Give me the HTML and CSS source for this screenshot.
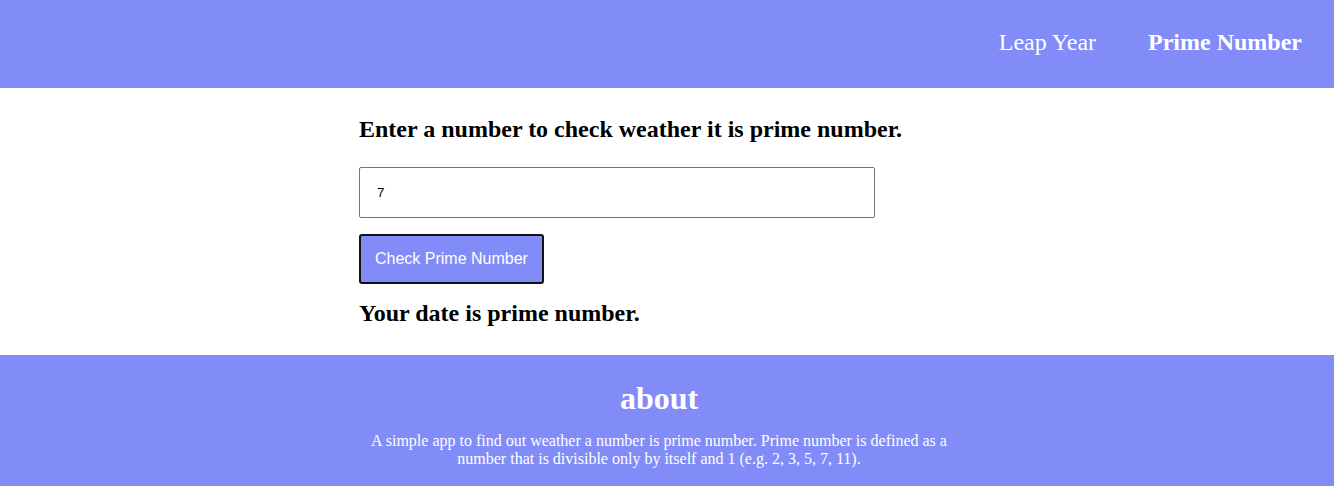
FILE: index.html
```html
<!DOCTYPE html>
<html lang="en">
<head>
<meta charset="utf-8">
<title>Prime Number</title>
<link rel="stylesheet" href="styles.css">
</head>
<body>
<header class="topbar">
  <nav class="nav">
    <a class="nav-link" href="#">Leap Year</a>
    <a class="nav-link active" href="#">Prime Number</a>
  </nav>
</header>
<main class="content">
  <h2 class="prompt">Enter a number to check weather it is prime number.</h2>
  <input class="num-input" type="text" value="7">
  <button class="check-btn" type="button">Check Prime Number</button>
  <h2 class="result">Your date is prime number.</h2>
</main>
<footer class="footer">
  <div class="footer-inner">
    <h1 class="footer-title">about</h1>
    <p class="footer-text">A simple app to find out weather a number is prime number. Prime number is defined as a number that is divisible only by itself and 1 (e.g. 2, 3, 5, 7, 11).</p>
  </div>
</footer>
</body>
</html>
```
FILE: styles.css
```css
html, body {
  margin: 0;
  padding: 0;
}
body {
  font-family: "Liberation Serif", "Times New Roman", serif;
  color: #000;
  background: #fff;
}
.topbar {
  box-sizing: border-box;
  background: #818cf8;
  height: 88px;
  display: flex;
  align-items: center;
  justify-content: flex-end;
  padding: 0 32px 4px;
}
.nav {
  display: flex;
  gap: 52px;
  align-items: center;
}
.nav-link {
  color: #fff;
  text-decoration: none;
  font-size: 24px;
}
.nav-link.active {
  font-weight: bold;
}
.content {
  width: 616px;
  margin: 0 auto;
  padding: 28px 0 28px;
  display: flex;
  flex-direction: column;
  align-items: flex-start;
}
.prompt {
  margin: 0 0 24px;
  font-size: 24px;
}
.num-input {
  box-sizing: border-box;
  width: 516px;
  height: 51px;
  border: 1px solid #767676;
  border-radius: 2px;
  padding: 0 17px;
  font-family: "Liberation Sans", Arial, sans-serif;
  font-size: 13.33px;
  color: #000;
  margin: 0 0 16px;
}
.check-btn {
  box-sizing: border-box;
  height: 50px;
  padding: 0 14px;
  background: #818cf8;
  color: #fff;
  border: 2px solid #111;
  border-radius: 3px;
  font-family: "Liberation Sans", Arial, sans-serif;
  font-size: 16px;
  margin: 0 0 16px;
}
.result {
  margin: 0;
  font-size: 24px;
}
.footer {
  background: #818cf8;
  color: #fff;
  padding: 25px 0 20px;
}
.footer-inner {
  width: 616px;
  margin: 0 auto;
  padding-right: 16px;
  box-sizing: border-box;
  text-align: center;
}
.footer-title {
  margin: 0 0 15px;
  font-size: 32px;
}
.footer-text {
  margin: 0;
  font-size: 16px;
  padding: 0 6px;
}
```
